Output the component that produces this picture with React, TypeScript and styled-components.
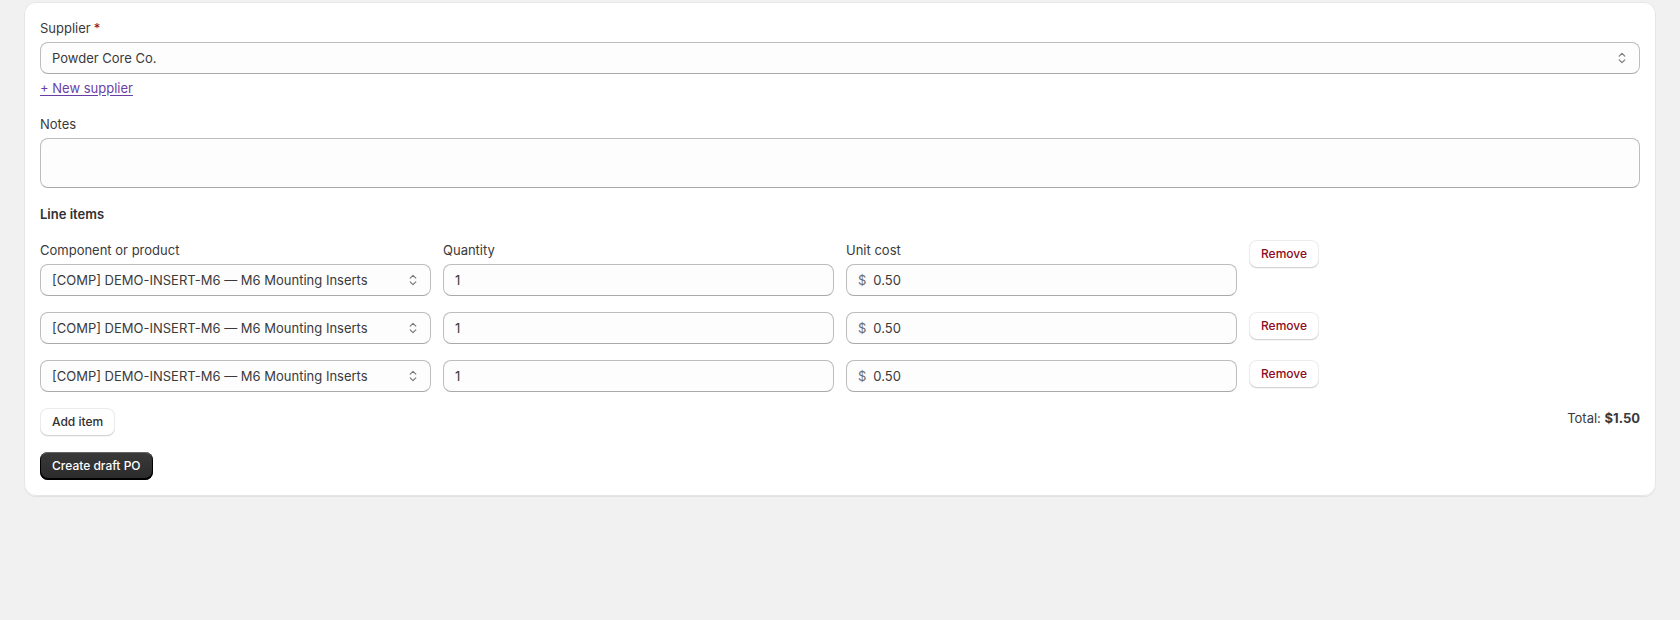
import React from "react";
import styled, { createGlobalStyle } from "styled-components";

const GlobalStyle = createGlobalStyle`
  html, body {
    margin: 0;
    padding: 0;
    background: #f1f1f1;
  }
  body {
    font-family: Inter, "Noto Sans", "Liberation Sans", sans-serif;
    font-size: 13px;
    line-height: 20px;
    color: #3a3a3a;
    -webkit-font-smoothing: antialiased;
  }
  * { box-sizing: border-box; }
`;

const Page = styled.div`
  padding: 2px 24px 24px;
`;

const Card = styled.section`
  background: #ffffff;
  border-radius: 12px;
  padding: 16px;
  box-shadow:
    0 1px 0 0 rgba(26, 26, 26, 0.07),
    inset 0 0 0 1px #e6e6e6;
  display: flex;
  flex-direction: column;
`;

const Field = styled.div<{ $mt?: number }>`
  display: flex;
  flex-direction: column;
  margin-top: ${(p) => p.$mt ?? 0}px;
`;

const Label = styled.label`
  display: block;
  font-size: 13px;
  line-height: 20px;
  color: #3a3a3a;
  margin-bottom: 4px;
`;

const Required = styled.span`
  color: #8e0b21;
  margin-left: 3px;
`;

const controlBase = `
  height: 32px;
  width: 100%;
  border-radius: 8px;
  background: #fdfdfd;
  border: 1px solid #bdbdbd;
  border-bottom-color: #a9a9a9;
  font-family: Inter, "Noto Sans", "Liberation Sans", sans-serif;
  font-size: 13px;
  line-height: 20px;
  color: #3a3a3a;
  display: flex;
  align-items: center;
  padding: 0 12px 0 11px;
`;

const SelectBox = styled.div`
  ${controlBase}
  justify-content: space-between;
`;

const SelectText = styled.span`
  white-space: nowrap;
  overflow: hidden;
  text-overflow: ellipsis;
`;

const TextBox = styled.div`
  ${controlBase}
  gap: 7px;
`;

const Prefix = styled.span`
  color: #6b6b6b;
`;

const NotesArea = styled.div`
  ${controlBase}
  height: 50px;
`;

const Link = styled.a`
  display: inline-block;
  align-self: flex-start;
  margin-top: 4px;
  color: #6a3fa5;
  text-decoration: underline;
  text-underline-offset: 2px;
  font-size: 13px;
  line-height: 20px;
  cursor: pointer;
`;

const Heading = styled.h3`
  margin: 16px 0 0;
  font-size: 13px;
  line-height: 20px;
  font-weight: 600;
  color: #303030;
`;

const Rows = styled.div`
  display: flex;
  flex-direction: column;
  gap: 16px;
  margin-top: 16px;
`;

const LineRow = styled.div`
  display: grid;
  grid-template-columns: repeat(3, 391px) auto;
  column-gap: 12px;
  align-items: start;
`;

const Button = styled.button<{ $tone?: "critical" | "default" }>`
  height: 28px;
  padding: 0 12px;
  border: none;
  border-radius: 8px;
  background: #ffffff;
  font-family: Inter, "Noto Sans", "Liberation Sans", sans-serif;
  font-size: 12px;
  font-weight: 500;
  line-height: 16px;
  color: ${(p) => (p.$tone === "critical" ? "#8e0b21" : "#303030")};
  box-shadow:
    inset 0 -1px 0 0 #d4d4d4,
    inset 0 0 0 1px rgba(0, 0, 0, 0.08),
    0 1px 0 0 rgba(0, 0, 0, 0.04);
  cursor: pointer;
  justify-self: start;
  white-space: nowrap;
`;

const PrimaryButton = styled.button`
  height: 28px;
  padding: 0 12px;
  border: none;
  border-radius: 8px;
  background: linear-gradient(180deg, #3a3a3a 0%, #2a2a2a 100%);
  color: #ffffff;
  font-family: Inter, "Noto Sans", "Liberation Sans", sans-serif;
  font-size: 12px;
  font-weight: 500;
  line-height: 16px;
  box-shadow:
    inset 0 1px 0 0 rgba(255, 255, 255, 0.22),
    inset 0 -1px 0 1px #000000;
  align-self: flex-start;
  margin-top: 16px;
  cursor: pointer;
`;

const Footer = styled.div`
  display: flex;
  justify-content: space-between;
  align-items: flex-start;
  margin-top: 16px;
`;

const Total = styled.div`
  font-size: 13px;
  line-height: 20px;
  color: #3a3a3a;
`;

const Strong = styled.strong`
  font-weight: 650;
`;

const Chevron = () => (
  <svg width="10" height="14" viewBox="0 0 10 14" fill="none" aria-hidden="true">
    <path d="M2.2 5.2 L5 2.4 L7.8 5.2" stroke="#7a7a7a" strokeWidth="1.2" strokeLinecap="round" strokeLinejoin="round" />
    <path d="M2.2 8.8 L5 11.6 L7.8 8.8" stroke="#7a7a7a" strokeWidth="1.2" strokeLinecap="round" strokeLinejoin="round" />
  </svg>
);

type Line = { product: string; qty: string; cost: string };

const lines: Line[] = [
  { product: "[COMP] DEMO-INSERT-M6 — M6 Mounting Inserts", qty: "1", cost: "0.50" },
  { product: "[COMP] DEMO-INSERT-M6 — M6 Mounting Inserts", qty: "1", cost: "0.50" },
  { product: "[COMP] DEMO-INSERT-M6 — M6 Mounting Inserts", qty: "1", cost: "0.50" },
];

const LineItem = ({ line, showLabels }: { line: Line; showLabels: boolean }) => (
  <LineRow>
    <Field>
      {showLabels && <Label>Component or product</Label>}
      <SelectBox>
        <SelectText>{line.product}</SelectText>
        <Chevron />
      </SelectBox>
    </Field>
    <Field>
      {showLabels && <Label>Quantity</Label>}
      <TextBox>{line.qty}</TextBox>
    </Field>
    <Field>
      {showLabels && <Label>Unit cost</Label>}
      <TextBox>
        <Prefix>$</Prefix>
        <span>{line.cost}</span>
      </TextBox>
    </Field>
    <Button $tone="critical">Remove</Button>
  </LineRow>
);

export default function App() {
  const total = lines.reduce((s, l) => s + Number(l.qty) * Number(l.cost), 0);
  return (
    <>
      <GlobalStyle />
      <Page>
        <Card>
          <Field>
            <Label>
              Supplier<Required>*</Required>
            </Label>
            <SelectBox>
              <SelectText>Powder Core Co.</SelectText>
              <Chevron />
            </SelectBox>
          </Field>
          <Link>+ New supplier</Link>

          <Field $mt={16}>
            <Label>Notes</Label>
            <NotesArea />
          </Field>

          <Heading>Line items</Heading>

          <Rows>
            {lines.map((line, i) => (
              <LineItem key={i} line={line} showLabels={i === 0} />
            ))}
          </Rows>

          <Footer>
            <Button>Add item</Button>
            <Total>
              Total: <Strong>${total.toFixed(2)}</Strong>
            </Total>
          </Footer>

          <PrimaryButton>Create draft PO</PrimaryButton>
        </Card>
      </Page>
    </>
  );
}
